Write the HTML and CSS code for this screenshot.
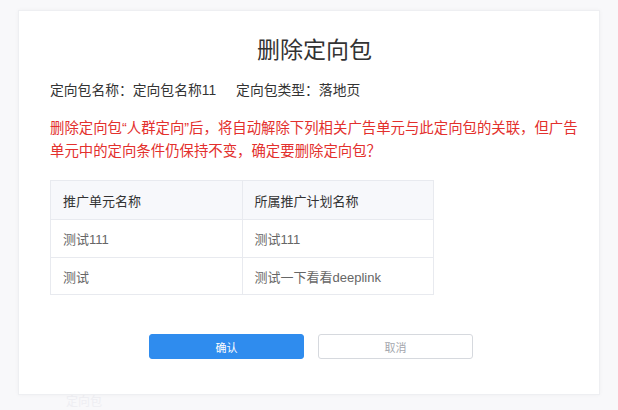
FILE: index.html
```html
<!DOCTYPE html>
<html lang="zh-CN">
<head>
<meta charset="utf-8">
<link rel="stylesheet" href="styles.css">
</head>
<body>
<div class="backdrop-text">定向包</div>
<div class="modal">
  <h1 class="title">删除定向包</h1>
  <div class="info">
    <span>定向包名称：定向包名称11</span>
    <span>定向包类型：落地页</span>
  </div>
  <p class="warn">删除定向包“人群定向”后，将自动解除下列相关广告单元与此定向包的关联，但广告<br>单元中的定向条件仍保持不变，确定要删除定向包？</p>
  <table class="tbl">
    <thead>
      <tr><th>推广单元名称</th><th>所属推广计划名称</th></tr>
    </thead>
    <tbody>
      <tr><td>测试111</td><td>测试111</td></tr>
      <tr><td>测试</td><td>测试一下看看deeplink</td></tr>
    </tbody>
  </table>
  <div class="actions">
    <button class="btn btn-primary">确认</button>
    <button class="btn btn-default">取消</button>
  </div>
</div>
</body>
</html>
```

FILE: styles.css
```css
html, body {
  margin: 0;
  padding: 0;
}
body {
  width: 618px;
  height: 410px;
  overflow: hidden;
  background: #f8f8fa;
  font-family: "Liberation Sans", "Noto Sans CJK SC", sans-serif;
  color: #333;
  position: relative;
}
.backdrop-text {
  position: absolute;
  left: 66px;
  top: 392px;
  font-size: 12px;
  color: #eeeef2;
}
.modal {
  position: relative;
  margin: 10px 0 0 18px;
  width: 582px;
  height: 385px;
  background: #fff;
  border: 1px solid #eeeff2;
  box-shadow: 0 0 4px rgba(0, 0, 0, 0.04);
  padding: 24px 32px 0 31px;
  box-sizing: border-box;
}
.title {
  margin: 0;
  padding-left: 12px;
  text-align: center;
  font-size: 23px;
  font-weight: 400;
  line-height: 30px;
  color: #333;
}
.info {
  margin-top: 16px;
  font-size: 13.8px;
  line-height: 20px;
  display: flex;
  gap: 20px;
  color: #333;
}
.warn {
  margin: 16px 0 0;
  font-size: 14.4px;
  line-height: 23px;
  color: #e3302d;
  white-space: nowrap;
}
.tbl {
  margin-top: 17px;
  border-collapse: collapse;
  width: 384px;
  font-size: 13px;
  table-layout: fixed;
}
.tbl th, .tbl td {
  border: 1px solid #e8eaef;
  text-align: left;
  padding: 0 12px;
  font-weight: 400;
}
.tbl th {
  background: #f7f8fb;
  height: 38px;
  color: #333;
}
.tbl td {
  height: 37px;
  color: #666;
}
.tbl tbody tr:last-child td {
  height: 36px;
}
.actions {
  margin-top: 39px;
  padding-left: 5px;
  display: flex;
  justify-content: center;
  gap: 14px;
}
.btn {
  width: 155px;
  height: 25px;
  border-radius: 3px;
  font-family: "Liberation Sans", "Noto Sans CJK SC", sans-serif;
  font-size: 11px;
  padding: 0;
  box-sizing: border-box;
}
.btn-primary {
  background: #2f8cee;
  border: 1px solid #2f8cee;
  color: #fff;
}
.btn-default {
  background: #fff;
  border: 1px solid #d6d9de;
  color: #a4a7ad;
}
```
